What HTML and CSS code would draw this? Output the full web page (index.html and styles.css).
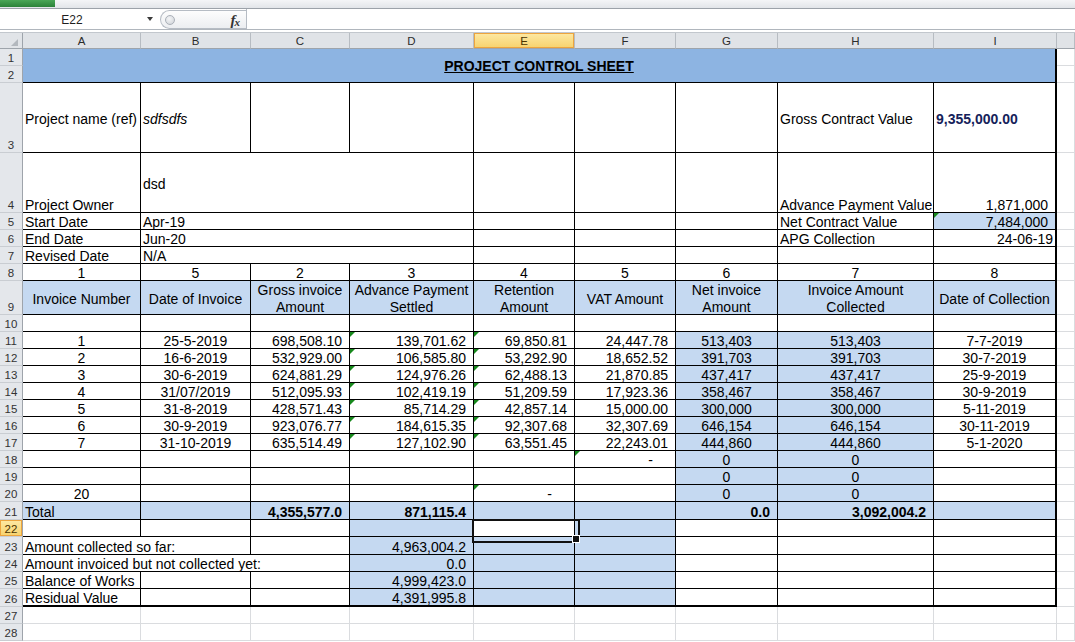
FILE: index.html
```html
<!DOCTYPE html>
<html lang="en">
<head>
<meta charset="utf-8">
<title>Project Control Sheet</title>
<link rel="stylesheet" href="styles.css">
</head>
<body>
<div class="ribbon"><div class="file-tab"></div></div>
<div class="fbar">
  <div class="namebox"><span class="ref">E22</span><span class="arrow"></span></div>
  <div class="fx-group"><span class="knob"></span><span class="fx"><i>f</i><sub>x</sub></span></div>
  <div class="finput"></div>
</div>
<div class="gap"></div>

<div class="sheet">
  <!-- column headers -->
  <div class="corner"></div>
  <div class="ch">A</div><div class="ch">B</div><div class="ch">C</div><div class="ch">D</div>
  <div class="ch on">E</div><div class="ch">F</div><div class="ch">G</div><div class="ch">H</div>
  <div class="ch">I</div><div class="ch"></div>

  <!-- rows 1-2 -->
  <div class="rh">1</div>
  <div class="c title"><span>PROJECT CONTROL SHEET</span></div>
  <div class="g"></div>
  <div class="rh">2</div>
  <div class="g"></div>

  <!-- row 3 -->
  <div class="rh">3</div>
  <div class="c mid">Project name (ref)</div>
  <div class="c mid it">sdfsdfs</div>
  <div class="c"></div><div class="c"></div><div class="c"></div><div class="c"></div><div class="c"></div>
  <div class="c mid">Gross Contract Value</div>
  <div class="c mid b navy edge">9,355,000.00</div>
  <div class="g"></div>

  <!-- row 4 -->
  <div class="rh">4</div>
  <div class="c">Project Owner</div>
  <div class="c s3 mid">dsd</div>
  <div class="c"></div><div class="c"></div><div class="c"></div>
  <div class="c">Advance Payment Value</div>
  <div class="c num edge">1,871,000</div>
  <div class="g"></div>

  <!-- row 5 -->
  <div class="rh">5</div>
  <div class="c">Start Date</div>
  <div class="c s3">Apr-19</div>
  <div class="c"></div><div class="c"></div><div class="c"></div>
  <div class="c">Net Contract Value</div>
  <div class="c num fill tri edge">7,484,000</div>
  <div class="g"></div>

  <!-- row 6 -->
  <div class="rh">6</div>
  <div class="c">End Date</div>
  <div class="c s3">Jun-20</div>
  <div class="c"></div><div class="c"></div><div class="c"></div>
  <div class="c">APG Collection</div>
  <div class="c dater edge">24-06-19</div>
  <div class="g"></div>

  <!-- row 7 -->
  <div class="rh">7</div>
  <div class="c">Revised Date</div>
  <div class="c s3">N/A</div>
  <div class="c"></div><div class="c"></div><div class="c"></div>
  <div class="c"></div>
  <div class="c edge"></div>
  <div class="g"></div>

  <!-- row 8 -->
  <div class="rh">8</div>
  <div class="c ctr">1</div><div class="c ctr">5</div><div class="c ctr">2</div><div class="c ctr">3</div>
  <div class="c ctr">4</div><div class="c ctr">5</div><div class="c ctr">6</div><div class="c ctr">7</div>
  <div class="c ctr edge">8</div>
  <div class="g"></div>

  <!-- row 9 -->
  <div class="rh">9</div>
  <div class="c hdr fill"><span>Invoice Number</span></div>
  <div class="c hdr fill"><span>Date of Invoice</span></div>
  <div class="c hdr fill"><span>Gross invoice<br>Amount</span></div>
  <div class="c hdr fill"><span>Advance Payment<br>Settled</span></div>
  <div class="c hdr fill"><span>Retention<br>Amount</span></div>
  <div class="c hdr fill"><span>VAT Amount</span></div>
  <div class="c hdr fill"><span>Net invoice<br>Amount</span></div>
  <div class="c hdr fill"><span>Invoice Amount<br>Collected</span></div>
  <div class="c hdr fill edge"><span>Date of Collection</span></div>
  <div class="g"></div>

  <!-- row 10 -->
  <div class="rh">10</div>
  <div class="c"></div><div class="c"></div><div class="c"></div><div class="c"></div>
  <div class="c"></div><div class="c"></div><div class="c"></div><div class="c"></div>
  <div class="c edge"></div>
  <div class="g"></div>

  <!-- row 11 -->
  <div class="rh">11</div>
  <div class="c ctr">1</div><div class="c ctr">25-5-2019</div>
  <div class="c num">698,508.10</div><div class="c num tri">139,701.62</div>
  <div class="c num tri">69,850.81</div><div class="c num">24,447.78</div>
  <div class="c ctr fill">513,403</div><div class="c ctr fill">513,403</div>
  <div class="c ctr edge">7-7-2019</div>
  <div class="g"></div>

  <!-- row 12 -->
  <div class="rh">12</div>
  <div class="c ctr">2</div><div class="c ctr">16-6-2019</div>
  <div class="c num">532,929.00</div><div class="c num tri">106,585.80</div>
  <div class="c num tri">53,292.90</div><div class="c num">18,652.52</div>
  <div class="c ctr fill">391,703</div><div class="c ctr fill">391,703</div>
  <div class="c ctr edge">30-7-2019</div>
  <div class="g"></div>

  <!-- row 13 -->
  <div class="rh">13</div>
  <div class="c ctr">3</div><div class="c ctr">30-6-2019</div>
  <div class="c num">624,881.29</div><div class="c num tri">124,976.26</div>
  <div class="c num tri">62,488.13</div><div class="c num">21,870.85</div>
  <div class="c ctr fill">437,417</div><div class="c ctr fill">437,417</div>
  <div class="c ctr edge">25-9-2019</div>
  <div class="g"></div>

  <!-- row 14 -->
  <div class="rh">14</div>
  <div class="c ctr">4</div><div class="c ctr">31/07/2019</div>
  <div class="c num">512,095.93</div><div class="c num tri">102,419.19</div>
  <div class="c num tri">51,209.59</div><div class="c num">17,923.36</div>
  <div class="c ctr fill">358,467</div><div class="c ctr fill">358,467</div>
  <div class="c ctr edge">30-9-2019</div>
  <div class="g"></div>

  <!-- row 15 -->
  <div class="rh">15</div>
  <div class="c ctr">5</div><div class="c ctr">31-8-2019</div>
  <div class="c num">428,571.43</div><div class="c num tri">85,714.29</div>
  <div class="c num tri">42,857.14</div><div class="c num">15,000.00</div>
  <div class="c ctr fill">300,000</div><div class="c ctr fill">300,000</div>
  <div class="c ctr edge">5-11-2019</div>
  <div class="g"></div>

  <!-- row 16 -->
  <div class="rh">16</div>
  <div class="c ctr">6</div><div class="c ctr">30-9-2019</div>
  <div class="c num">923,076.77</div><div class="c num tri">184,615.35</div>
  <div class="c num tri">92,307.68</div><div class="c num">32,307.69</div>
  <div class="c ctr fill">646,154</div><div class="c ctr fill">646,154</div>
  <div class="c ctr edge">30-11-2019</div>
  <div class="g"></div>

  <!-- row 17 -->
  <div class="rh">17</div>
  <div class="c ctr">7</div><div class="c ctr">31-10-2019</div>
  <div class="c num">635,514.49</div><div class="c num tri">127,102.90</div>
  <div class="c num tri">63,551.45</div><div class="c num">22,243.01</div>
  <div class="c ctr fill">444,860</div><div class="c ctr fill">444,860</div>
  <div class="c ctr edge">5-1-2020</div>
  <div class="g"></div>

  <!-- row 18 -->
  <div class="rh">18</div>
  <div class="c"></div><div class="c"></div><div class="c"></div><div class="c"></div><div class="c"></div>
  <div class="c dash tri">-</div>
  <div class="c ctr fill">0</div><div class="c ctr fill">0</div>
  <div class="c edge"></div>
  <div class="g"></div>

  <!-- row 19 -->
  <div class="rh">19</div>
  <div class="c"></div><div class="c"></div><div class="c"></div><div class="c"></div><div class="c"></div><div class="c"></div>
  <div class="c ctr fill">0</div><div class="c ctr fill">0</div>
  <div class="c edge"></div>
  <div class="g"></div>

  <!-- row 20 -->
  <div class="rh">20</div>
  <div class="c ctr">20</div><div class="c"></div><div class="c"></div><div class="c"></div>
  <div class="c dash tri">-</div><div class="c"></div>
  <div class="c ctr fill">0</div><div class="c ctr fill">0</div>
  <div class="c edge"></div>
  <div class="g"></div>

  <!-- row 21 -->
  <div class="rh">21</div>
  <div class="c fill">Total</div><div class="c fill"></div>
  <div class="c fill num b">4,355,577.0</div><div class="c fill num b">871,115.4</div>
  <div class="c fill"></div><div class="c fill"></div>
  <div class="c fill num b">0.0</div><div class="c fill num b">3,092,004.2</div>
  <div class="c fill edge"></div>
  <div class="g"></div>

  <!-- row 22 -->
  <div class="rh on">22</div>
  <div class="c"></div><div class="c"></div><div class="c"></div>
  <div class="c fill"></div><div class="c sel"></div><div class="c fill"></div>
  <div class="c"></div><div class="c"></div>
  <div class="c edge"></div>
  <div class="g"></div>

  <!-- row 23 -->
  <div class="rh">23</div>
  <div class="c s2">Amount collected so far:</div><div class="c"></div>
  <div class="c fill num">4,963,004.2</div><div class="c fill"></div><div class="c fill"></div>
  <div class="c"></div><div class="c"></div>
  <div class="c edge"></div>
  <div class="g"></div>

  <!-- row 24 -->
  <div class="rh">24</div>
  <div class="c s3">Amount invoiced but not collected yet:</div>
  <div class="c fill num">0.0</div><div class="c fill"></div><div class="c fill"></div>
  <div class="c"></div><div class="c"></div>
  <div class="c edge"></div>
  <div class="g"></div>

  <!-- row 25 -->
  <div class="rh">25</div>
  <div class="c">Balance of Works</div><div class="c"></div><div class="c"></div>
  <div class="c fill num">4,999,423.0</div><div class="c fill"></div><div class="c fill"></div>
  <div class="c"></div><div class="c"></div>
  <div class="c edge"></div>
  <div class="g"></div>

  <!-- row 26 -->
  <div class="rh">26</div>
  <div class="c foot">Residual Value</div><div class="c foot"></div><div class="c foot"></div>
  <div class="c fill num foot">4,391,995.8</div><div class="c fill foot"></div><div class="c fill foot"></div>
  <div class="c foot"></div><div class="c foot"></div>
  <div class="c foot edge"></div>
  <div class="g"></div>

  <!-- row 27 -->
  <div class="rh">27</div>
  <div class="g"></div><div class="g"></div><div class="g"></div><div class="g"></div><div class="g"></div>
  <div class="g"></div><div class="g"></div><div class="g"></div><div class="g"></div><div class="g"></div>

  <!-- row 28 -->
  <div class="rh">28</div>
  <div class="g"></div><div class="g"></div><div class="g"></div><div class="g"></div><div class="g"></div>
  <div class="g"></div><div class="g"></div><div class="g"></div><div class="g"></div><div class="g"></div>
</div>
</body>
</html>
```

FILE: styles.css
```css
* { box-sizing: border-box; }

html, body {
  margin: 0;
  padding: 0;
  background: #fff;
  overflow: hidden;
}

body {
  width: 1075px;
  height: 642px;
  font-family: "Liberation Sans", Arial, sans-serif;
  color: #000;
}

/* ---------- window chrome ---------- */
.ribbon {
  height: 9px;
  display: flex;
  background: linear-gradient(#f4f5f7, #e2e5e9);
  border-bottom: 1px solid #9ca2a9;
}

.file-tab {
  width: 55px;
  height: 7px;
  background: linear-gradient(#4aa657, #2a8239);
}

.fbar {
  height: 21px;
  display: flex;
  background: #fff;
  border-bottom: 1px solid #b0b6bd;
}

.namebox {
  width: 158px;
  display: flex;
  align-items: center;
  font-size: 12px;
  color: #1e1e1e;
}

.namebox .ref {
  width: 144px;
  text-align: center;
  padding-top: 1px;
}

.namebox .arrow {
  width: 0;
  height: 0;
  margin-left: 3px;
  border-left: 3.5px solid transparent;
  border-right: 3.5px solid transparent;
  border-top: 4px solid #3a3a3a;
}

.fx-group {
  width: 86px;
  margin: 1px 0 0 2px;
  display: flex;
  align-items: center;
  padding-left: 4px;
  border: 1px solid #b6bcc4;
  border-right: none;
  border-radius: 10px 0 0 10px;
  background: linear-gradient(#fdfdfd, #eceef1);
}

.knob {
  width: 10px;
  height: 10px;
  border-radius: 50%;
  border: 1px solid #aab0b8;
  background: radial-gradient(circle at 40% 35%, #f4f5f7, #cdd1d6);
}

.fx {
  margin-left: auto;
  margin-right: 6px;
  font-family: "Liberation Serif", "Times New Roman", serif;
  font-weight: bold;
  font-size: 15px;
  color: #333;
  line-height: 1;
  padding-top: 1px;
}

.fx sub {
  font-size: 11px;
  font-style: italic;
  vertical-align: -1px;
  margin-left: -1px;
}

.finput {
  flex: 1;
  border-left: 1px solid #b6bcc4;
  background: #fff;
}

.gap {
  height: 3px;
  border-bottom: 1px solid #c2c7cd;
}

/* ---------- sheet grid ---------- */
.sheet {
  display: grid;
  grid-template-columns: 23px 118px 110px 99px 124px 101px 101px 102px 156px 123px 1fr;
  grid-template-rows:
    16px 17px 17px 70px 60px 17px 17px 17px 17px 34px
    repeat(11, 17px)
    18px 17px 18px 17px 17px 18px 17px 17px;
  font-size: 14px;
}

.corner {
  position: relative;
  background: #e1e4e8;
  border-right: 1px solid #9ea4ab;
  border-bottom: 1px solid #9ea4ab;
}

.corner::after {
  content: "";
  position: absolute;
  right: 4px;
  bottom: 2px;
  border-left: 7px solid transparent;
  border-bottom: 7px solid #b3b8be;
}

.ch {
  display: flex;
  align-items: center;
  justify-content: center;
  padding-top: 1px;
  font-size: 11.5px;
  color: #2c2c2c;
  background: #e0e3e7;
  border-right: 1px solid #b7bcc2;
  border-bottom: 1px solid #9ea4ab;
}

.rh {
  display: flex;
  align-items: flex-end;
  justify-content: center;
  line-height: 13px;
  font-size: 11.5px;
  color: #333;
  background: #e4e7eb;
  border-right: 1px solid #9ea4ab;
  border-bottom: 1px solid #c9cdd2;
}

.ch.on,
.rh.on {
  background: linear-gradient(#fde9a4, #f7d26c);
  box-shadow: inset 0 0 0 1px #eda53e;
  color: #4a3300;
}

.c {
  display: flex;
  align-items: flex-end;
  padding: 0 2px;
  line-height: 13px;
  white-space: nowrap;
  overflow: hidden;
  border-right: 1px solid #000;
  border-bottom: 1px solid #000;
}

.g {
  border-right: 1px solid #dadcdf;
  border-bottom: 1px solid #dadcdf;
}

/* alignment */
.ctr { justify-content: center; }
.num { justify-content: flex-end; padding-right: 7px; }
.dater { justify-content: flex-end; padding-right: 2px; }
.dash { justify-content: flex-end; padding-right: 22px; }

.mid {
  align-items: center;
  padding-top: 3px;
  line-height: 17px;
}

.hdr {
  align-items: center;
  justify-content: center;
  text-align: center;
  padding-top: 3px;
  line-height: 17px;
}

/* text styles */
.b { font-weight: bold; }
.it { font-style: italic; }
.navy { color: #15225a; }

/* fills & borders */
.fill { background: #c5d9f1; }
.edge { border-right-width: 2px; }
.foot { border-bottom-width: 2px; }

.s2 { grid-column: span 2; }
.s3 { grid-column: span 3; }

.title {
  grid-column: span 9;
  grid-row: span 2;
  align-items: center;
  justify-content: center;
  padding-top: 2px;
  line-height: 17px;
  background: #8db4e2;
  font-weight: bold;
  text-decoration: underline;
  border-right-width: 2px;
}

/* green error indicator */
.tri { position: relative; }

.tri::before {
  content: "";
  position: absolute;
  left: 0;
  top: 0;
  border-top: 5px solid #17891c;
  border-right: 5px solid transparent;
}

/* active cell */
.sel {
  position: relative;
  overflow: visible;
  background: #fff;
}

.sel::after {
  content: "";
  position: absolute;
  left: -2px;
  top: -1px;
  width: 104px;
  height: 20px;
  border: 2px solid #111;
}

.sel::before {
  content: "";
  position: absolute;
  left: 98px;
  top: 15px;
  width: 6px;
  height: 6px;
  background: #111;
  border: 1px solid #fff;
  z-index: 1;
}
```
